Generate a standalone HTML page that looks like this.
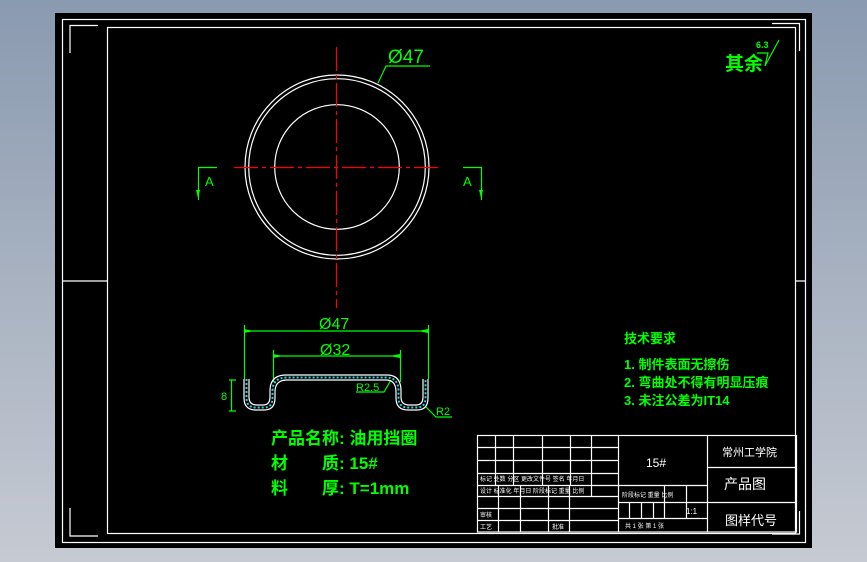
<!DOCTYPE html>
<html><head><meta charset="utf-8"><style>
html,body{margin:0;padding:0;width:867px;height:562px;overflow:hidden;background:linear-gradient(#8a9ab0,#c6cad2);}
svg{position:absolute;left:0;top:0}
text{font-family:"Liberation Sans","Noto Sans CJK SC",sans-serif}
</style></head><body>
<svg width="867" height="562" viewBox="0 0 867 562">
<rect x="55" y="13" width="757" height="535" fill="#000"/>
<g fill="none" stroke="#fff" stroke-width="1.2">
<rect x="62.5" y="19.5" width="743" height="523"/>
<rect x="107.5" y="27.5" width="688" height="506"/>
<path d="M70 53V25.5H98M70 508V536H98M772 23.5H799.5V51M772 534H799.5V511"/>
<path d="M62.5 281H107.5M795.5 281H805.5"/>
<circle cx="337" cy="167" r="92"/>
<circle cx="337" cy="167" r="88.3"/>
<circle cx="337" cy="167" r="62.3"/>
</g>
<g stroke="#f00" stroke-width="1.2" stroke-dasharray="24,4,4,4">
<path d="M336.5 47V308"/>
<path d="M234 167.5H440"/>
</g>
<g stroke="#00ff00" fill="none" stroke-width="1.2">
<path d="M198 167.5H217M198.5 167V200M481.5 167V200M463 167.5H481.5"/>
<path d="M378 83L386 66H430"/>
<path d="M244.5 379V325M428.5 379V325M244 331H428M273.5 382V350M400.5 382V350M273 356H400"/>
<path d="M229 380H236M229 411H236M231.5 380V411"/>
<path d="M356 392H384L391 380M426 407L436 417H452"/>
</g>
<g fill="#00ff00">
<path d="M196 190h4l-2 8z M479 190h4l-2 8z M244 329l10 2-10 2z M428 329l-10 2 10 2z M273 354l10 2-10 2z M400 354l-10 2 10 2z"/>
</g>
<g fill="#00ff00" font-size="13">
<text x="205" y="186">A</text><text x="463" y="186">A</text>
<text x="388" y="63" font-size="19">Ø47</text>
<text x="319" y="329" font-size="16">Ø47</text>
<text x="320" y="355" font-size="16">Ø32</text>
</g>
<g fill="none" stroke="#fff" stroke-width="1.2">
<path d="M244 379V398Q244 410 256 410H264Q275 410 275 398V392Q275 380 287 380H386Q396 380 396 392V398Q396 410 408 410H417Q428 410 428 398V379"/>
<path d="M249 379V397Q249 405 257 405H263Q270 405 270 397V391Q270 375 286 375H387Q401 375 401 391V397Q401 405 409 405H416Q423 405 423 397V379"/>
</g>
<g fill="none" stroke="#2ad4e0" stroke-width="2" stroke-dasharray="2,2">
<path d="M246.5 379V398Q246.5 407.5 256 407.5H264Q272.5 407.5 272.5 398V391Q272.5 377.5 287 377.5H386Q398.5 377.5 398.5 391V398Q398.5 407.5 408 407.5H417Q425.5 407.5 425.5 398V379"/>
</g>
<g fill="#00ff00" font-size="11"><text x="221" y="400">8</text><text x="356" y="391">R2.5</text><text x="436" y="415">R2</text></g>
<g fill="#00ff00" font-weight="bold" font-size="17">
<text x="271" y="444">产品名称: 油用挡圈</text>
<text x="271" y="469">材&#12288;&#12288;质: 15#</text>
<text x="271" y="494">料&#12288;&#12288;厚: T=1mm</text>
</g>
<g fill="#00ff00" font-weight="bold" font-size="13">
<text x="624" y="343">技术要求</text>
<text x="624" y="369">1. 制件表面无擦伤</text>
<text x="624" y="387">2. 弯曲处不得有明显压痕</text>
<text x="624" y="405">3. 未注公差为IT14</text>
<text x="725" y="70" font-size="19">其余</text>
<text x="756" y="48" font-size="9">6.3</text>
</g>
<path d="M757 53H768L765 66 779 40" stroke="#00ff00" fill="none" stroke-width="1.2"/>
<g stroke="#fff" fill="none" stroke-width="1.2">
<rect x="477.5" y="435.5" width="319" height="96.5"/>
<path d="M477 447.5H618M477 460.5H618M477 473.5H618M477 485.5H707M477 496.5H618M477 508.5H618M477 520.5H618"/>
<path d="M495.5 435V485M513.5 435V485M542.5 435V485M570.5 435V485M591.5 435V485M618.5 435V532"/>
<path d="M498.5 485V532M520.5 485V532M548.5 485V532M569.5 485V532M591.5 485V496"/>
<path d="M618 502.5H707M618 518.5H707M629.5 502V518M641.5 502V518M653.5 502V518M664.5 485V518M686.5 485V518"/>
<path d="M707.5 435V532M707 467.5H797M707 502.5H797"/>
</g>
<g fill="#fff" font-size="12">
<text x="646" y="467">15#</text>
<text x="722" y="456" font-size="11">常州工学院</text>
<text x="724" y="489" font-size="14">产品图</text>
<text x="725" y="525" font-size="13">图样代号</text>
<text x="686" y="514" font-size="8">1:1</text>
<text x="480" y="481" font-size="6">标记 处数 分区 更改文件号 签名 年月日</text>
<text x="480" y="493" font-size="6">设计 标准化 年月日 阶段标记 重量 比例</text>
<text x="622" y="497" font-size="6">阶段标记 重量 比例</text>
<text x="480" y="529" font-size="6">工艺</text><text x="480" y="517" font-size="6">审核</text>
<text x="552" y="529" font-size="6">批准</text>
<text x="625" y="528" font-size="6">共 1 张 第 1 张</text>
</g>
</svg>
</body></html>
